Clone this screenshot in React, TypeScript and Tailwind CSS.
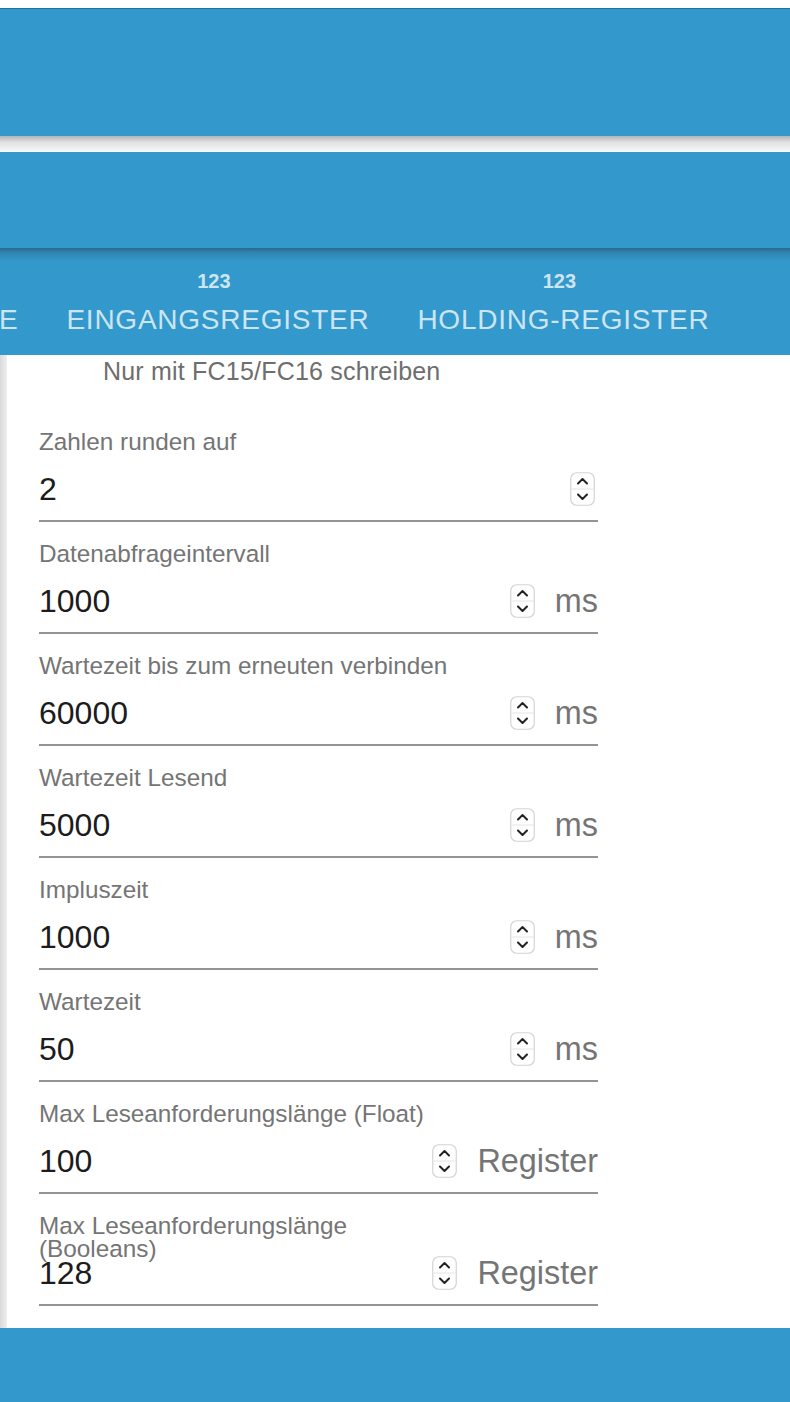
import React from "react";

const fields = [
  { label: "Zahlen runden auf", value: "2" },
  { label: "Datenabfrageintervall", value: "1000", unit: "ms" },
  { label: "Wartezeit bis zum erneuten verbinden", value: "60000", unit: "ms" },
  { label: "Wartezeit Lesend", value: "5000", unit: "ms" },
  { label: "Impluszeit", value: "1000", unit: "ms" },
  { label: "Wartezeit", value: "50", unit: "ms" },
  { label: "Max Leseanforderungslänge (Float)", value: "100", unit: "Register" },
  { label: "Max Leseanforderungslänge (Booleans)", value: "128", unit: "Register" },
];

const Spinner = () => (
  <svg width="25" height="34" viewBox="0 0 25 34" className="shrink-0">
    <rect x="0.75" y="0.75" width="23.5" height="32.5" rx="6" fill="#fff" stroke="#d4d4d4" strokeWidth="1.2" />
    <line x1="1.5" y1="17" x2="23.5" y2="17" stroke="#e4e4e4" strokeWidth="1" />
    <polyline points="8,11.5 12.5,7 17,11.5" fill="none" stroke="#222" strokeWidth="2" strokeLinecap="round" strokeLinejoin="round" />
    <polyline points="8,22.5 12.5,27 17,22.5" fill="none" stroke="#222" strokeWidth="2" strokeLinecap="round" strokeLinejoin="round" />
  </svg>
);

const Field = ({ label, value, unit }: { label: string; value: string; unit?: string }) => (
  <div className="w-[559px] h-[112px] pt-[20px] border-b-2 border-[#949494]">
    <div className="h-[24px] max-w-[410px] text-[24.3px] leading-[23px] text-[#757575]">{label}</div>
    <div className="mt-[15px] h-[40px] flex items-center">
      <div className="flex-1 text-[32px] leading-[40px] text-[#1c1c1c]">{value}</div>
      <div className="mr-[3px] flex items-center">
        <Spinner />
      </div>
      {unit && <div className="ml-[17px] text-[32.4px] leading-[40px] text-[#757575]">{unit}</div>}
    </div>
  </div>
);

const Tab = ({ label }: { label: string }) => (
  <div className="flex flex-col items-center px-[24px]">
    <div className="mr-[8px] h-[20px] text-[20px] leading-[20px] font-bold text-white/75">123</div>
    <div className="mt-[15px] text-[28px] leading-[28px] tracking-[0.75px] text-white/75">{label}</div>
  </div>
);

export default function App() {
  return (
    <div className="w-[790px] h-[1402px] overflow-hidden bg-white font-['Liberation_Sans',Arial,sans-serif]">
      {/* top app bar */}
      <div className="mt-[8px] h-[128px] bg-[#3399cc] border-t border-[#23729c]" />
      <div className="h-[16px] bg-linear-to-b from-[#b4b4b4] via-[#e2e2e2] via-40% to-[#f8f8f8]" />

      {/* second bar */}
      <div className="h-[96px] bg-[#3399cc]" />

      {/* tabs */}
      <div className="h-[107px] bg-[#3399cc] flex flex-col">
        <div className="h-[14px] bg-linear-to-b from-[#2a6a8c] via-[#3186b3] via-35% to-[#3399cc]" />
        <div className="mt-[9px] flex items-end">
          <div className="-ml-[1px] pr-[24px] text-[28px] leading-[28px] tracking-[0.75px] text-white/75">E</div>
          <Tab label="EINGANGSREGISTER" />
          <Tab label="HOLDING-REGISTER" />
        </div>
      </div>

      {/* content */}
      <div className="flex h-[973px]">
        <div className="w-[7px] bg-linear-to-r from-[#d9d9d9] to-[#efefef]" />
        <div className="flex-1 pl-[32px]">
          <div className="pt-[4px] pl-[64px] h-[55px] text-[25px] leading-[24px] tracking-[0.2px] text-[#6e6e6e]">
            Nur mit FC15/FC16 schreiben
          </div>
          {fields.map((f) => (
            <Field key={f.label} {...f} />
          ))}
        </div>
      </div>

      {/* bottom bar */}
      <div className="h-[74px] bg-[#3399cc]" />
    </div>
  );
}
